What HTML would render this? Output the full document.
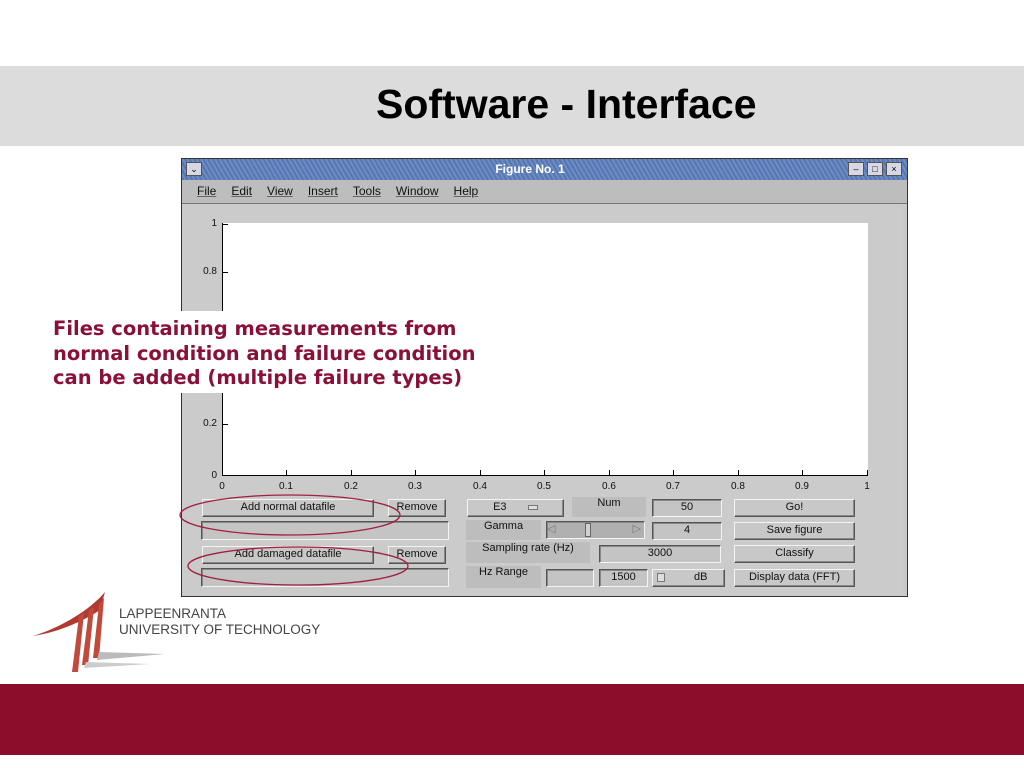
<!DOCTYPE html>
<html><head><meta charset="utf-8"><style>
*{margin:0;padding:0;box-sizing:border-box}
body{width:1024px;height:768px;position:relative;background:#fff;overflow:hidden;font-family:"Liberation Sans",sans-serif}
.a{position:absolute}
.btn{position:absolute;background:#c8c8c8;border:1px solid;border-color:#f4f4f4 #555 #555 #f4f4f4;box-shadow:inset -1px -1px 0 #888;font-size:11px;text-align:center;color:#111;line-height:15px}
.ed{position:absolute;background:#c4c4c4;border:1px solid;border-color:#555 #f4f4f4 #f4f4f4 #555;box-shadow:inset 1px 1px 0 #888;font-size:11px;text-align:center;color:#111;line-height:15px}
.lb{position:absolute;background:#bdbdbd;font-size:11px;text-align:center;color:#111}
.yl{position:absolute;font-size:10px;color:#111;text-align:right;width:30px}
.xl{position:absolute;font-size:10px;color:#111;top:481px;width:30px;text-align:center}
.menu span{margin-right:15px;text-decoration:underline;text-decoration-color:#666}
</style></head><body>
<div class="a" style="left:0;top:66px;width:1024px;height:80px;background:#dcdcdc"></div>
<div class="a" style="left:376px;top:80px;font-size:41px;line-height:48px;font-weight:bold;color:#000;white-space:nowrap">Software - Interface</div>

<!-- window -->
<div class="a" style="left:181px;top:158px;width:727px;height:439px;background:#c9c9c9;border:1px solid #333"></div>
<div class="a" style="left:182px;top:159px;width:725px;height:21px;background:repeating-linear-gradient(60deg,#5576b0 0 2px,#6d8cc4 2px 4px)"></div>
<div class="a" style="left:186px;top:162px;width:16px;height:14px;background:#d8d8e4;border:1px solid #555;font-size:9px;text-align:center;line-height:12px">&#8964;</div>
<div class="a" style="left:470px;top:162px;width:120px;text-align:center;color:#fff;font-size:12px;font-weight:bold">Figure No. 1</div>
<div class="a" style="left:848px;top:162px;width:16px;height:14px;background:#d8d8e4;border:1px solid #555;font-size:9px;text-align:center;line-height:12px">&#8211;</div>
<div class="a" style="left:867px;top:162px;width:16px;height:14px;background:#d8d8e4;border:1px solid #555;font-size:9px;text-align:center;line-height:12px">&#9633;</div>
<div class="a" style="left:886px;top:162px;width:16px;height:14px;background:#d8d8e4;border:1px solid #555;font-size:9px;text-align:center;line-height:12px">&#215;</div>
<div class="a menu" style="left:182px;top:180px;width:725px;height:24px;background:#bdbdbd;border-bottom:1px solid #777;font-size:12px;padding:4px 0 0 15px;color:#111"><span>File</span><span>Edit</span><span>View</span><span>Insert</span><span>Tools</span><span>Window</span><span>Help</span></div>
<div class="a" style="left:183px;top:205px;width:719px;height:390px;background:#cbcbcb"></div>
<div class="a" style="left:222px;top:223px;width:646px;height:253px;background:#fff;border-left:1px solid #000;border-bottom:1px solid #000"></div>
<svg class="a" style="left:0;top:0" width="1024" height="768">
<g stroke="#000" stroke-width="1">
<line x1="222" y1="224.5" x2="228" y2="224.5"/><line x1="222" y1="272.5" x2="228" y2="272.5"/><line x1="222" y1="424.5" x2="228" y2="424.5"/>
<line x1="286.5" y1="476" x2="286.5" y2="470"/><line x1="351.5" y1="476" x2="351.5" y2="470"/><line x1="415.5" y1="476" x2="415.5" y2="470"/><line x1="480.5" y1="476" x2="480.5" y2="470"/><line x1="544.5" y1="476" x2="544.5" y2="470"/><line x1="609.5" y1="476" x2="609.5" y2="470"/><line x1="673.5" y1="476" x2="673.5" y2="470"/><line x1="738.5" y1="476" x2="738.5" y2="470"/><line x1="802.5" y1="476" x2="802.5" y2="470"/><line x1="867.5" y1="476" x2="867.5" y2="470"/>
</g></svg>
<div class="yl" style="left:187px;top:218px">1</div>
<div class="yl" style="left:187px;top:266px">0.8</div>
<div class="yl" style="left:187px;top:418px">0.2</div>
<div class="yl" style="left:187px;top:470px">0</div>
<div class="xl" style="left:207px">0</div><div class="xl" style="left:271px">0.1</div><div class="xl" style="left:336px">0.2</div><div class="xl" style="left:400px">0.3</div><div class="xl" style="left:465px">0.4</div><div class="xl" style="left:529px">0.5</div><div class="xl" style="left:594px">0.6</div><div class="xl" style="left:658px">0.7</div><div class="xl" style="left:723px">0.8</div><div class="xl" style="left:787px">0.9</div><div class="xl" style="left:852px">1</div>

<div class="btn" style="left:202px;top:499px;width:172px;height:18px">Add normal datafile</div>
<div class="btn" style="left:388px;top:499px;width:58px;height:18px">Remove</div>
<div class="ed" style="left:201px;top:521px;width:248px;height:19px"></div>
<div class="btn" style="left:202px;top:546px;width:172px;height:18px">Add damaged datafile</div>
<div class="btn" style="left:388px;top:546px;width:58px;height:18px">Remove</div>
<div class="ed" style="left:201px;top:568px;width:248px;height:19px"></div>

<div class="btn" style="left:467px;top:499px;width:97px;height:18px">E3 &nbsp;&nbsp;&nbsp;&nbsp;&nbsp; <span style="display:inline-block;width:10px;height:5px;background:#ddd;border:1px solid #777"></span></div>
<div class="lb" style="left:572px;top:497px;width:74px;height:20px">Num</div>
<div class="ed" style="left:652px;top:499px;width:70px;height:18px">50</div>
<div class="btn" style="left:734px;top:499px;width:121px;height:18px">Go!</div>

<div class="lb" style="left:466px;top:520px;width:75px;height:20px">Gamma</div>
<div class="ed" style="left:546px;top:521px;width:99px;height:18px;background:#b0b0b0;text-align:left;color:#777">&#9665;<span style="position:absolute;left:38px;top:1px;width:6px;height:14px;background:#d0d0d0;border:1px solid #666"></span><span style="position:absolute;right:3px">&#9655;</span></div>
<div class="ed" style="left:652px;top:522px;width:70px;height:18px">4</div>
<div class="btn" style="left:734px;top:522px;width:121px;height:18px">Save figure</div>

<div class="lb" style="left:466px;top:542px;width:124px;height:21px">Sampling rate (Hz)</div>
<div class="ed" style="left:599px;top:545px;width:122px;height:18px">3000</div>
<div class="btn" style="left:734px;top:545px;width:121px;height:18px">Classify</div>

<div class="lb" style="left:466px;top:566px;width:75px;height:22px">Hz Range</div>
<div class="ed" style="left:546px;top:569px;width:48px;height:18px"></div>
<div class="ed" style="left:599px;top:569px;width:49px;height:18px">1500</div>
<div class="btn" style="left:652px;top:569px;width:73px;height:18px">&nbsp;&nbsp;&nbsp;&nbsp;&nbsp;&nbsp;&nbsp;&nbsp;dB<span style="position:absolute;left:4px;top:3px;width:8px;height:9px;background:#ddd;border:1px solid #777"></span></div>
<div class="btn" style="left:734px;top:569px;width:121px;height:18px">Display data (FFT)</div>

<svg class="a" style="left:0;top:0" width="1024" height="768" fill="none" stroke="#a02040" stroke-width="1.3">
<ellipse cx="290" cy="515" rx="110" ry="20"/>
<ellipse cx="298" cy="566" rx="110" ry="19"/>
</svg>

<div class="a" style="left:0;top:311px;width:500px;height:82px;background:#fff"></div>
<div class="a" style="left:53px;top:317px;font-family:'DejaVu Sans',sans-serif;font-weight:bold;font-size:19.5px;line-height:24.5px;color:#8b1038;white-space:nowrap">Files containing measurements from<br>normal condition and failure condition<br>can be added (multiple failure types)</div>

<!-- logo -->
<svg class="a" style="left:0;top:580px" width="200" height="100">
<path d="M105 12 C90 30 60 48 33 56 C60 52 85 40 100 30 Z" fill="#b03a30"/>
<path d="M84 33 L78 92 L72 92 L79 36 Z" fill="#c04a3c"/>
<path d="M94 27 L88 85 L82 85 L89 30 Z" fill="#c04a3c"/>
<path d="M104 18 L99 78 L93 78 L99 24 Z" fill="#c04a3c"/>
<path d="M99 72 L165 74 L97 80 Z" fill="#bbb"/>
<path d="M86 82 L150 84 L84 88 Z" fill="#ccc"/>
</svg>
<div class="a" style="left:119px;top:606px;font-size:13.5px;line-height:16px;color:#444">LAPPEENRANTA<br>UNIVERSITY OF TECHNOLOGY</div>

<div class="a" style="left:0;top:684px;width:1024px;height:71px;background:#8c0c2c"></div>
</body></html>
